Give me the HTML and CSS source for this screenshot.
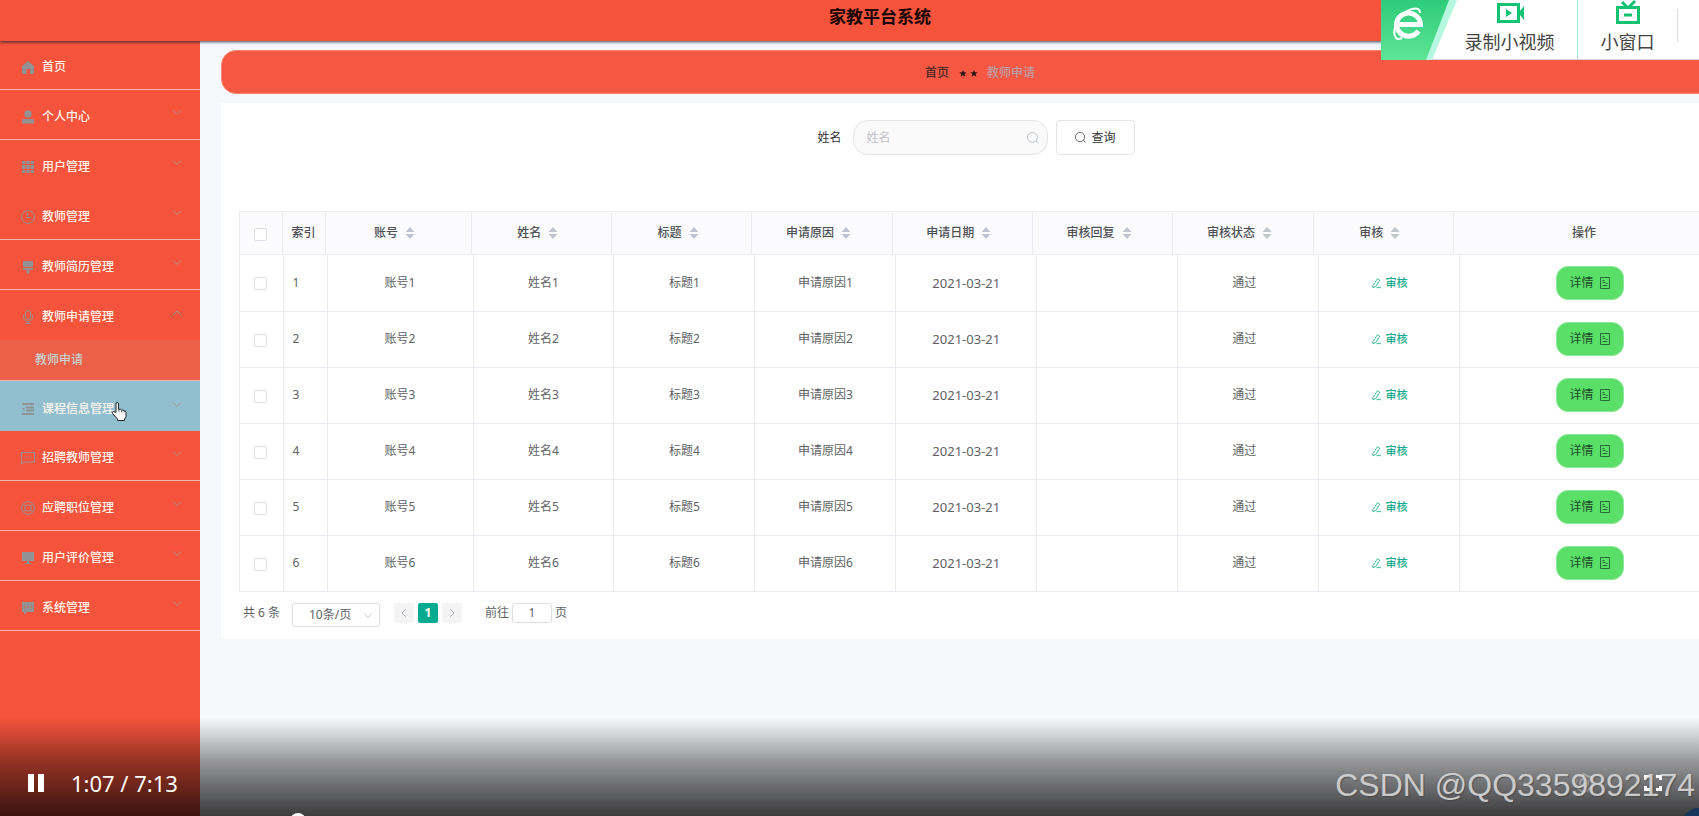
FILE: index.html
```html
<!DOCTYPE html>
<html lang="zh-CN">
<head>
<meta charset="utf-8">
<title>家教平台系统</title>
<link rel="stylesheet" href="styles.css">
</head>
<body>
<svg class="sprite" aria-hidden="true">
  <symbol id="down" viewBox="0 0 12 12"><path d="M2 3.500l4 4 4-4" fill="none" stroke="currentColor"/></symbol>
  <symbol id="up" viewBox="0 0 12 12"><path d="M2 8l4-4 4 4" fill="none" stroke="currentColor"/></symbol>
  <symbol id="search" viewBox="0 0 14 14"><circle cx="6.500" cy="6.500" r="5" fill="none" stroke="currentColor"/><path d="M10 10l2.500 2.500" stroke="currentColor"/></symbol>
  <symbol id="sort" viewBox="0 0 10 12"><path d="M5 0l4.500 5h-9zM5 12l4.500-5h-9z" fill="currentColor"/></symbol>
  <symbol id="edit" viewBox="0 0 12 12"><path d="M2 8.500L6.500 1.500q1.500-1 2.500.5.5 1-.5 2L5 9.500l-3 1zM6 10.500H11" fill="none" stroke="currentColor" stroke-width=".9"/></symbol>
  <symbol id="doc" viewBox="0 0 12 12"><path d="M1.500.5h9v11h-9zM3.500 3.500h2M3.500 5.500h3M3.500 8.500h5M7 6.500h1.500" fill="none" stroke="currentColor" stroke-width=".8"/></symbol>
</svg>
<div class="app">
  <header class="topbar"><h1 class="topbar-title">家教平台系统</h1></header>
  <div class="layout">
    <nav class="sidebar">
      <a class="item" href="#"><svg class="icon" viewBox="0 0 14 14"><path d="M7 1l6 5v8H9V9H5.500v5H1V6z" fill="currentColor"/></svg><span>首页</span></a>
      <a class="item" href="#"><svg class="icon" viewBox="0 0 14 14"><circle cx="7" cy="4" r="3.700" fill="currentColor"/><path d="M1 13.500V11q0-2 2-2h8q2 0 2 2v2.500z" fill="currentColor"/></svg><span>个人中心</span><svg class="arrow"><use href="#down"/></svg></a>
      <a class="item plain" href="#"><svg class="icon" viewBox="0 0 14 14"><path d="M1 1h3.500v3H1zM5.300 1h3.500v3H5.300zM9.600 1H13v3H9.600zM1 5h3.500v4H1zM5.300 5h3.500v4H5.300zM9.600 5H13v4H9.600zM1 10h3.500v3H1zM5.300 10h3.500v3H5.300zM9.600 10H13v3H9.600z" fill="currentColor"/></svg><span>用户管理</span><svg class="arrow"><use href="#down"/></svg></a>
      <a class="item" href="#"><svg class="icon" viewBox="0 0 14 14"><circle cx="7" cy="7" r="6.400" fill="none" stroke="currentColor"/><path d="M6.500 3v4.500H10" fill="none" stroke="currentColor"/></svg><span>教师管理</span><svg class="arrow"><use href="#down"/></svg></a>
      <a class="item" href="#"><svg class="icon" viewBox="0 0 14 14"><path d="M2 1h10v6H2zM2 8h10v2H8.500v3L7 14l-1.500-1v-3H2z" fill="currentColor"/></svg><span>教师简历管理</span><svg class="arrow"><use href="#down"/></svg></a>
      <a class="item plain" href="#"><svg class="icon" viewBox="0 0 14 14"><rect x="4.500" y=".5" width="5" height="9" rx="2.500" fill="none" stroke="currentColor"/><path d="M2.500 5v2.500a4.500 4 0 0 0 9 0V5M7 11.500v2M4.500 13.500h5" fill="none" stroke="currentColor"/></svg><span>教师申请管理</span><svg class="arrow"><use href="#up"/></svg></a>
      <a class="subitem" href="#">教师申请</a>
      <a class="item hover" href="#"><svg class="icon" viewBox="0 0 14 14"><path d="M1 1h12v2H1zM5 4.500h8v2H5zM5 7.500h8v2H5zM1 11h12v2H1zM1 7l2.500-2v4z" fill="currentColor"/></svg><span>课程信息管理</span><svg class="arrow"><use href="#down"/></svg>
        <svg class="cursor" viewBox="0 0 16 20"><path d="M5 11V2.500Q5 1 6.200 1T7.500 2.500V8Q10 7 10.500 8.500 12.500 8 13 9.500 15 9 15 11v4l-1.500 2.500V19h-7v-1.500L1.500 12Q1 10.500 2.500 10z" fill="#fff" stroke="#222"/><path d="M8 8v3M10.500 8.500V11M13 9.500V11" stroke="#555" stroke-width=".8"/></svg></a>
      <a class="item" href="#"><svg class="icon" viewBox="0 0 14 14"><path d="M.5 1.500h13v9.500H3L.5 13z" fill="none" stroke="currentColor"/><path d="M3.500 6H5M6.300 6h1.500M9 6h1.500" stroke="currentColor"/></svg><span>招聘教师管理</span><svg class="arrow"><use href="#down"/></svg></a>
      <a class="item" href="#"><svg class="icon" viewBox="0 0 14 14"><circle cx="7" cy="7" r="6.400" fill="none" stroke="currentColor"/><circle cx="7" cy="7" r="3.200" fill="none" stroke="currentColor"/><path d="M2.500 3.500L5 5M11.500 3.500L9 5M2.500 10.500L5 9M11.500 10.500L9 9" stroke="currentColor"/></svg><span>应聘职位管理</span><svg class="arrow"><use href="#down"/></svg></a>
      <a class="item" href="#"><svg class="icon" viewBox="0 0 14 14"><path d="M1 1h12v9H1zM6 10h2v2h2.500v1h-7v-1H6z" fill="currentColor"/></svg><span>用户评价管理</span><svg class="arrow"><use href="#down"/></svg></a>
      <a class="item" href="#"><svg class="icon" viewBox="0 0 14 14"><path d="M1 1h12v10H6l-3 2.500V11H1z" fill="currentColor"/><path d="M3 6h1.500M6.200 6h1.500M9.500 6H11" stroke="#f5533b"/></svg><span>系统管理</span><svg class="arrow"><use href="#down"/></svg></a>
    </nav>
    <main class="main">
      <div class="crumbs"><a class="crumb-home" href="#">首页</a><span class="crumb-stars"><svg viewBox="0 0 10 10"><path d="M5 2l1 2.300 2.800.2-2.200 1.600.8 2.700L5 7.200 2.600 8.800l.8-2.700-2.200-1.600L4 4.300z"/></svg><svg viewBox="0 0 10 10"><path d="M5 2l1 2.300 2.800.2-2.200 1.600.8 2.700L5 7.200 2.600 8.800l.8-2.700-2.200-1.600L4 4.300z"/></svg></span><span class="crumb-here">教师申请</span></div>
      <section class="panel">
        <form class="search">
          <label for="name">姓名</label>
          <span class="field"><input id="name" type="text" placeholder="姓名"><svg class="field-icon"><use href="#search"/></svg></span>
          <button class="query" type="button"><svg class="query-icon"><use href="#search"/></svg>查询</button>
        </form>
        <div class="tables">
          <table class="grid head">
            <colgroup><col class="c-check"><col class="c-index"><col class="c-first"><col class="c-mid" span="7"><col></colgroup>
            <thead><tr>
              <th><input type="checkbox" aria-label="全选"></th><th class="left">索引</th>
              <th>账号<svg class="sort"><use href="#sort"/></svg></th><th>姓名<svg class="sort"><use href="#sort"/></svg></th><th>标题<svg class="sort"><use href="#sort"/></svg></th><th>申请原因<svg class="sort"><use href="#sort"/></svg></th><th>申请日期<svg class="sort"><use href="#sort"/></svg></th><th>审核回复<svg class="sort"><use href="#sort"/></svg></th><th>审核状态<svg class="sort"><use href="#sort"/></svg></th><th>审核<svg class="sort"><use href="#sort"/></svg></th><th>操作</th>
            </tr></thead>
          </table>
          <table class="grid body">
            <colgroup><col class="c-check"><col class="c-index"><col class="c-first"><col class="c-mid" span="7"><col></colgroup>
            <tbody>
              <tr><td><input type="checkbox" aria-label="选择1"></td><td class="left">1</td><td>账号1</td><td>姓名1</td><td>标题1</td><td>申请原因1</td><td class="date">2021-03-21</td><td></td><td class="status">通过</td><td><button class="audit" type="button"><svg><use href="#edit"/></svg>审核</button></td><td><button class="detail" type="button">详情<svg><use href="#doc"/></svg></button></td></tr>
              <tr><td><input type="checkbox" aria-label="选择2"></td><td class="left">2</td><td>账号2</td><td>姓名2</td><td>标题2</td><td>申请原因2</td><td class="date">2021-03-21</td><td></td><td class="status">通过</td><td><button class="audit" type="button"><svg><use href="#edit"/></svg>审核</button></td><td><button class="detail" type="button">详情<svg><use href="#doc"/></svg></button></td></tr>
              <tr><td><input type="checkbox" aria-label="选择3"></td><td class="left">3</td><td>账号3</td><td>姓名3</td><td>标题3</td><td>申请原因3</td><td class="date">2021-03-21</td><td></td><td class="status">通过</td><td><button class="audit" type="button"><svg><use href="#edit"/></svg>审核</button></td><td><button class="detail" type="button">详情<svg><use href="#doc"/></svg></button></td></tr>
              <tr><td><input type="checkbox" aria-label="选择4"></td><td class="left">4</td><td>账号4</td><td>姓名4</td><td>标题4</td><td>申请原因4</td><td class="date">2021-03-21</td><td></td><td class="status">通过</td><td><button class="audit" type="button"><svg><use href="#edit"/></svg>审核</button></td><td><button class="detail" type="button">详情<svg><use href="#doc"/></svg></button></td></tr>
              <tr><td><input type="checkbox" aria-label="选择5"></td><td class="left">5</td><td>账号5</td><td>姓名5</td><td>标题5</td><td>申请原因5</td><td class="date">2021-03-21</td><td></td><td class="status">通过</td><td><button class="audit" type="button"><svg><use href="#edit"/></svg>审核</button></td><td><button class="detail" type="button">详情<svg><use href="#doc"/></svg></button></td></tr>
              <tr><td><input type="checkbox" aria-label="选择6"></td><td class="left">6</td><td>账号6</td><td>姓名6</td><td>标题6</td><td>申请原因6</td><td class="date">2021-03-21</td><td></td><td class="status">通过</td><td><button class="audit" type="button"><svg><use href="#edit"/></svg>审核</button></td><td><button class="detail" type="button">详情<svg><use href="#doc"/></svg></button></td></tr>
            </tbody>
          </table>
        </div>
        <div class="pager">
          <span class="total">共 6 条</span>
          <span class="size"><select aria-label="每页条数"><option>10条/页</option></select><svg class="size-arrow"><use href="#down"/></svg></span>
          <div class="pages">
            <button type="button" aria-label="上一页"><svg viewBox="0 0 12 12"><path d="M8 2L4 6l4 4"/></svg></button>
            <button class="current" type="button">1</button>
            <button type="button" aria-label="下一页"><svg viewBox="0 0 12 12"><path d="M4 2l4 4-4 4"/></svg></button>
          </div>
          <label class="jump">前往<input type="text" value="1">页</label>
        </div>
      </section>
    </main>
  </div>
</div>

<div class="recorder">
  <svg class="recorder-logo" viewBox="0 0 76 60">
    <defs><linearGradient id="g" x1="0" y1="0" x2="0" y2="1"><stop offset="0" stop-color="#2ecb7c"/><stop offset="1" stop-color="#5de594"/></linearGradient></defs>
    <path d="M67 0h9L51 60h-7z" fill="#b5f8df"/><path d="M0 0h68L45 60H0z" fill="url(#g)"/>
    <path d="M17 24.500H39.500A12 11.500 0 1 0 37.500 31" fill="none" stroke="#fff" stroke-width="5"/>
    <path d="M39 13q0-6-8-4-10 3-15 13-5 11-1 16 2 2 6 0" fill="none" stroke="#fff" stroke-width="2"/>
  </svg>
  <button class="tool tool-video" type="button"><svg viewBox="0 0 28 24"><path d="M2.500 4.500h20v17h-20z" fill="none" stroke="#14c274" stroke-width="3"/><path d="M10 9l6 4-6 4zM24 11l4-5v14l-4-5z" fill="#14c274"/></svg>录制小视频</button>
  <button class="tool tool-window" type="button"><svg viewBox="0 0 28 24"><path d="M3.500 7.500h21v15h-21zM8 2l5 5M21 1l-6 6M10 15h8" fill="none" stroke="#14c274" stroke-width="3"/></svg>小窗口</button>
  <span class="divider"></span>
</div>

<div class="player">
  <button class="pause" type="button" aria-label="暂停"><svg viewBox="0 0 16 18"><path d="M0 0h6v18H0zM10 0h6v18h-6z" fill="#fff"/></svg></button>
  <span class="time">1:07 / 7:13</span>
  <svg class="gear" viewBox="0 0 20 20"><path d="M10 1l3 2 4 1 1 5 1 2-3 4-3 3-3 1-3-1-3-3-3-4 1-2 1-5 4-1z"/><circle cx="10" cy="10" r="4"/></svg>
  <button class="full" type="button" aria-label="全屏"><svg viewBox="0 0 18 16"><path d="M1.500 5V1.500H6M12 1.500h4.500V5M16.500 11v3.500H12M6 14.500H1.500V11" fill="none" stroke="#fff" stroke-width="3"/></svg></button>
  <span class="knob"></span>
  <span class="bubble"></span>
</div>
<div class="watermark">CSDN @QQ3359892174</div>
</body>
</html>
```
FILE: styles.css
```css
* { box-sizing: border-box; }
html, body { height: 100%; }
body {
  margin: 0;
  overflow: hidden;
  position: relative;
  background: #f7f8fc;
  color: #606266;
  font: 12px/18px "Noto Sans", "Noto Sans CJK SC", sans-serif;
}
button, input, select { font: inherit; color: inherit; margin: 0; }
button { padding: 0; border: 0; background: none; }
a { text-decoration: none; }
.sprite { position: absolute; width: 0; height: 0; }

/* The recorded page runs past the right edge of the frame. */
.app { width: calc(100% + 61px); min-height: 100%; display: flex; flex-direction: column; }
.topbar {
  height: 41px;
  background: #f5533b;
  box-shadow: 0 1px 3px rgba(0, 30, 50, .8);
  text-align: center;
  z-index: 1;
}
.topbar-title { margin: 0; padding-top: 5px; font-size: 17px; line-height: 24px; color: #160504; font-weight: 600; }
.layout { flex: 1; display: flex; }

.sidebar { flex: 0 0 200px; background: #f5533b; }
.item {
  position: relative;
  display: flex;
  align-items: center;
  height: 50px;
  padding: 4px 17px 0 21px;
  border-bottom: 1px solid #f3b5a9;
  color: #fff3ec;
  font-weight: 500;
}
.item:first-child { height: 49px; }
.item.plain { border-color: transparent; }
.item.hover { background: #91bfd0; border-color: #91bfd0; padding-top: 6px; }
.icon { width: 14px; height: 14px; margin-right: 7px; color: #929294; overflow: visible; }
.arrow { width: 12px; height: 12px; margin: 0 0 8px auto; color: #a98f8a; }
.cursor { position: absolute; left: 111px; top: 20px; width: 16px; height: 21px; }
.subitem {
  display: block;
  height: 41px;
  padding: 11px 0 0 35px;
  background: #ec5f49;
  border-bottom: 1px solid #f3b5a9;
  color: #c3d5d2;
  font-weight: 500;
}

.main { flex: 1; min-width: 0; padding: 9px 21px 0; }
.crumbs {
  display: flex;
  align-items: center;
  justify-content: center;
  height: 44px;
  padding-top: 2px;
  border-radius: 15px;
  border: 1px solid #f98572;
  background: #f75844;
  font-weight: 500;
}
.crumb-home { color: #4b2622; }
.crumb-stars { display: flex; gap: 1px; margin: 0 8px 0 9px; }
.crumb-stars svg { width: 10px; height: 10px; fill: #2a1614; }
.crumb-here { color: #bd9aa2; }

.panel { margin-top: 9px; padding: 17px 18px 12px; background: #fff; }
.search { display: flex; justify-content: center; align-items: center; padding-right: 8px; color: #333; }
.field { position: relative; margin: 0 8px 0 11px; }
.field input {
  display: block;
  width: 195px;
  height: 35px;
  padding: 0 32px 0 13px;
  border: 1px solid #e3e3e8;
  border-radius: 15px;
  background: #fafafa;
}
.field input::placeholder { color: #c0c0c6; }
.field-icon { position: absolute; right: 8px; top: 11px; width: 14px; height: 14px; color: #c0c4cc; }
.query {
  display: flex;
  align-items: center;
  justify-content: center;
  gap: 4px;
  width: 79px;
  height: 35px;
  border: 1px solid #e4e4ec;
  border-radius: 4px;
  background: #fff;
}
.query-icon { width: 13px; height: 13px; color: #666; }

.tables { margin-top: 56px; overflow: hidden; border-left: 1px solid #ebebf3; }
.grid { width: 100%; table-layout: fixed; border-collapse: collapse; text-align: center; }
.grid.head { width: calc(100% - 6px); }
.head .c-check { width: 42px; }
.head .c-index { width: 43px; }
.body .c-check { width: 43px; }
.body .c-index { width: 44px; }
.c-first { width: 146px; }
.head .c-mid { width: 9.52%; }
.body .c-mid { width: 9.52%; }
.grid th, .grid td { padding: 0; border: 1px solid #ebebf3; }
.grid th:first-child, .grid td:first-child { border-left: 0; }
.grid th { height: 43px; padding-bottom: 1px; background: #fbfbfe; font-weight: 500; color: #4e5055; }
.grid td { height: 56px; border-top: 0; }
.grid .left { padding-left: 9px; text-align: left; }
.grid .date { font-size: 13px; }
.grid .status { padding-right: 8px; }
.sort { width: 10px; height: 12px; margin: 0 7px; vertical-align: -2px; color: #c0c4cc; }
.grid input {
  appearance: none;
  display: block;
  width: 13px;
  height: 13px;
  margin: 4px auto 0;
  border: 1px solid #dcdfe6;
  border-radius: 2px;
  background: #fff;
}
.grid td input { margin-top: 2px; margin-left: 14px; }
.audit { font-size: 11px; color: #12a88a; font-weight: 500; }
.audit svg { width: 11px; height: 11px; margin-right: 4px; vertical-align: -2px; }
.detail {
  width: 68px;
  height: 34px;
  border: 1px solid #8ee79a;
  border-radius: 12px;
  background: #5ae068;
  color: #1f4a2a;
}
.detail svg { width: 12px; height: 12px; margin-left: 5px; vertical-align: -2px; }

.pager { display: flex; align-items: flex-start; padding: 11px 0 0 4px; line-height: 20px; }
.total { width: 49px; }
.size { position: relative; margin-right: 14px; }
.size select {
  appearance: none;
  display: block;
  width: 88px;
  height: 24px;
  padding: 0 0 0 16px;
  border: 1px solid #dcdfe6;
  border-radius: 3px;
  background: #fff;
}
.size-arrow { position: absolute; right: 6px; top: 7px; width: 12px; height: 12px; color: #c0c4cc; }
.pages { display: flex; gap: 4px; }
.pages button { width: 20px; height: 20px; border-radius: 2px; background: #f4f4f5; font-weight: 700; line-height: 20px; }
.pages .current { background: #04ab90; color: #fff; }
.pages svg { display: block; width: 12px; height: 12px; margin: 0 auto; fill: none; stroke: #b4b7bd; }
.jump { display: flex; margin-left: 23px; }
.jump input {
  width: 40px;
  height: 20px;
  margin: 0 3px;
  padding: 0;
  border: 1px solid #dcdfe6;
  border-radius: 3px;
  text-align: center;
}

.recorder {
  position: absolute;
  top: 0;
  right: 0;
  z-index: 2;
  display: flex;
  width: 318px;
  height: 60px;
  background: #fff;
  border-bottom: 1px solid #cfd8d3;
}
.recorder-logo { width: 76px; height: 60px; }
.tool { display: flex; flex-direction: column; align-items: center; font-size: 18px; line-height: 24px; color: #444; }
.tool svg { width: 28px; height: 24px; margin-bottom: 6px; }
.tool-video { width: 121px; padding-right: 15px; border-right: 1px solid #a9e8cc; }
.tool-window { width: 99px; }
.divider { width: 1px; height: 33px; margin-top: 9px; background: #ddd; }

.player {
  position: absolute;
  left: 0;
  right: 0;
  bottom: 0;
  height: 98px;
  display: flex;
  align-items: center;
  padding: 32px 37px 0 28px;
  overflow: hidden;
  background: linear-gradient(rgba(0, 0, 0, 0), rgba(0, 0, 0, .4) 45%, rgba(0, 0, 0, .76));
  z-index: 3;
}
.pause svg { display: block; width: 16px; height: 18px; }
.time { margin-left: 27px; font-size: 22px; line-height: 28px; color: #fff; }
.gear { width: 20px; height: 20px; margin-left: auto; fill: none; stroke: rgba(255, 255, 255, .3); stroke-width: 2; }
.full { margin-left: 50px; }
.full svg { display: block; width: 18px; height: 16px; }
.knob { position: absolute; left: 290px; bottom: -13px; width: 16px; height: 16px; border-radius: 50%; background: #fff; }
.bubble { position: absolute; right: -18px; bottom: -28px; width: 36px; height: 36px; border-radius: 50%; background: #17365c; }
.watermark {
  position: absolute;
  right: 4px;
  bottom: 13px;
  z-index: 4;
  font: 32px/36px "Liberation Sans", sans-serif;
  color: rgba(225, 225, 225, .85);
  text-shadow: 1px 1px 1px rgba(60, 60, 60, .6);
}
```
